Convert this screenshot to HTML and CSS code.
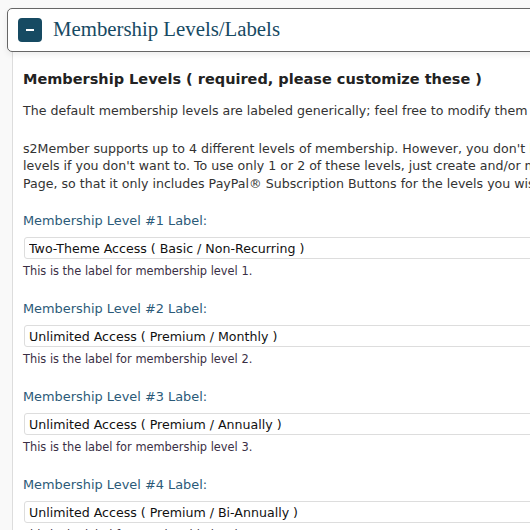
FILE: index.html
```html
<!DOCTYPE html>
<html>
<head>
<meta charset="utf-8">
<link rel="stylesheet" href="styles.css">
</head>
<body>
<div class="page">
  <div class="section-head">
    <span class="toggle"><span class="dash"></span></span>
    <span class="section-title">Membership Levels/Labels</span>
  </div>
  <div class="section-body">
    <h3 class="heading">Membership Levels ( required, please customize these )</h3>
    <p class="intro">The default membership levels are labeled generically; feel free to modify them as needed.</p>
    <p class="intro intro-long">s2Member supports up to 4 different levels of membership. However, you don't have to use all of these<br>levels if you don't want to. To use only 1 or 2 of these levels, just create and/or modify your Membership Options<br>Page, so that it only includes PayPal® Subscription Buttons for the levels you wish to use.</p>

    <div class="field">
      <label class="field-label">Membership Level #1 Label:</label>
      <input class="field-input" type="text" value="Two-Theme Access ( Basic / Non-Recurring )">
      <div class="field-note">This is the label for membership level 1.</div>
    </div>
    <div class="field">
      <label class="field-label">Membership Level #2 Label:</label>
      <input class="field-input" type="text" value="Unlimited Access ( Premium / Monthly )">
      <div class="field-note">This is the label for membership level 2.</div>
    </div>
    <div class="field">
      <label class="field-label">Membership Level #3 Label:</label>
      <input class="field-input" type="text" value="Unlimited Access ( Premium / Annually )">
      <div class="field-note">This is the label for membership level 3.</div>
    </div>
    <div class="field">
      <label class="field-label">Membership Level #4 Label:</label>
      <input class="field-input" type="text" value="Unlimited Access ( Premium / Bi-Annually )">
      <div class="field-note">This is the label for membership level 4.</div>
    </div>
  </div>
</div>
</body>
</html>
```
FILE: styles.css
```css
html, body {
  margin: 0;
  padding: 0;
  background: #f9f9f9;
  overflow: hidden;
  height: 530px;
}
.page {
  width: 800px;
  padding: 8px 0 0 7px;
  font-family: "DejaVu Sans", Verdana, sans-serif;
  font-size: 12.6px;
  color: #333;
}
.section-head {
  position: relative;
  z-index: 1;
  display: flex;
  align-items: center;
  gap: 11px;
  height: 42px;
  padding-left: 10px;
  background: #fff;
  border: 1px solid #666;
  border-radius: 5px;
  box-shadow: 0 3px 6px rgba(0, 0, 0, 0.07);
}
.toggle {
  display: flex;
  align-items: center;
  justify-content: center;
  width: 24px;
  height: 24px;
  border-radius: 4px;
  background: #164a62;
}
.dash {
  width: 8px;
  height: 2px;
  background: #fff;
}
.section-title {
  font-family: "Liberation Serif", "Times New Roman", serif;
  font-size: 20.8px;
  color: #174a63;
  position: relative;
  top: -1px;
}
.section-body {
  margin-left: 5px;
  border-left: 1px solid #ddd;
  background: #fff;
  padding: 18px 0 40px 10px;
  height: 600px;
}
.heading {
  margin: 0 0 14px;
  font-size: 14.5px;
  line-height: 18px;
  font-weight: bold;
  color: #222;
}
.intro {
  margin: 0;
  line-height: 17.5px;
  white-space: nowrap;
}
.intro-long {
  margin-top: 20px;
}
.field {
  display: flex;
  flex-direction: column;
  margin-top: 21px;
}
.field + .field {
  margin-top: 23px;
}
.field-label {
  color: #2b5a78;
  font-size: 12.9px;
  line-height: 16px;
  margin-bottom: 8px;
}
.field-input {
  box-sizing: border-box;
  height: 22px;
  margin: 0 0 0 1px;
  padding: 0 4px;
  border: 1px solid #ddd;
  border-radius: 3px;
  font-family: "DejaVu Sans", Verdana, sans-serif;
  font-size: 12.6px;
  color: #111;
  background: #fff;
}
.field-note {
  margin-top: 5px;
  font-size: 11.4px;
  line-height: 14px;
  color: #3a2f45;
}
```
